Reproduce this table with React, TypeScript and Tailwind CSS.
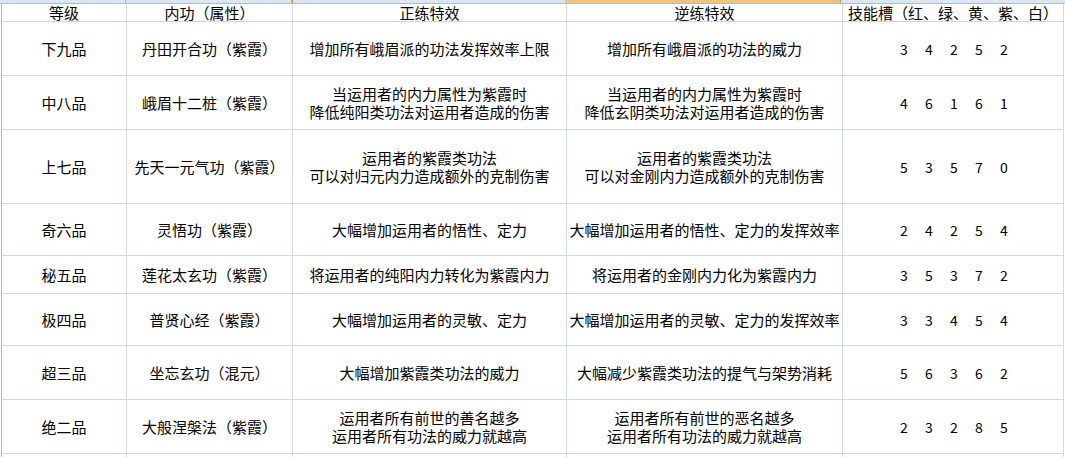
const FONT = "font-['Noto_Sans_CJK_SC','Noto_Sans',sans-serif]";

type Row = {
  grade: string;
  skill: string;
  forward: string[];
  reverse: string[];
  slots: number[];
};

const ROWS: Row[] = [
  {
    grade: "下九品",
    skill: "丹田开合功（紫霞）",
    forward: ["增加所有峨眉派的功法发挥效率上限"],
    reverse: ["增加所有峨眉派的功法的威力"],
    slots: [3, 4, 2, 5, 2],
  },
  {
    grade: "中八品",
    skill: "峨眉十二桩（紫霞）",
    forward: ["当运用者的内力属性为紫霞时", "降低纯阳类功法对运用者造成的伤害"],
    reverse: ["当运用者的内力属性为紫霞时", "降低玄阴类功法对运用者造成的伤害"],
    slots: [4, 6, 1, 6, 1],
  },
  {
    grade: "上七品",
    skill: "先天一元气功（紫霞）",
    forward: ["运用者的紫霞类功法", "可以对归元内力造成额外的克制伤害"],
    reverse: ["运用者的紫霞类功法", "可以对金刚内力造成额外的克制伤害"],
    slots: [5, 3, 5, 7, 0],
  },
  {
    grade: "奇六品",
    skill: "灵悟功（紫霞）",
    forward: ["大幅增加运用者的悟性、定力"],
    reverse: ["大幅增加运用者的悟性、定力的发挥效率"],
    slots: [2, 4, 2, 5, 4],
  },
  {
    grade: "秘五品",
    skill: "莲花太玄功（紫霞）",
    forward: ["将运用者的纯阳内力转化为紫霞内力"],
    reverse: ["将运用者的金刚内力化为紫霞内力"],
    slots: [3, 5, 3, 7, 2],
  },
  {
    grade: "极四品",
    skill: "普贤心经（紫霞）",
    forward: ["大幅增加运用者的灵敏、定力"],
    reverse: ["大幅增加运用者的灵敏、定力的发挥效率"],
    slots: [3, 3, 4, 5, 4],
  },
  {
    grade: "超三品",
    skill: "坐忘玄功（混元）",
    forward: ["大幅增加紫霞类功法的威力"],
    reverse: ["大幅减少紫霞类功法的提气与架势消耗"],
    slots: [5, 6, 3, 6, 2],
  },
  {
    grade: "绝二品",
    skill: "大般涅槃法（紫霞）",
    forward: ["运用者所有前世的善名越多", "运用者所有功法的威力就越高"],
    reverse: ["运用者所有前世的恶名越多", "运用者所有功法的威力就越高"],
    slots: [2, 3, 2, 8, 5],
  },
];

const HEADERS = ["等级", "内功（属性）", "正练特效", "逆练特效", "技能槽（红、绿、黄、紫、白）"];

function Cell({ children }: { children: React.ReactNode }) {
  return (
    <div className="bg-white flex flex-col items-center justify-center text-center whitespace-pre leading-[18px] text-[15px] text-black">
      {children}
    </div>
  );
}

export default function App() {
  return (
    <div className={`w-[1065px] h-[457px] overflow-hidden bg-white ${FONT}`}>
      {/* column header strip, cut off at the top */}
      <div className="flex h-[4px] border-b border-[#a9bdd3]">
        <div className="w-[2px] bg-[#dce6f1]" />
        <div className="w-[124px] bg-[#dce6f1] border-r border-[#9eb6ce]" />
        <div className="w-[166px] bg-[#dce6f1] border-r border-[#9eb6ce]" />
        <div className="w-[273px] bg-[#dce6f1] border-l border-[#f29436]" />
        <div className="w-[276px] bg-[#f7c36e] border-r border-[#f29436]" />
        <div className="flex-1 bg-[#dce6f1]" />
      </div>

      <div className="flex">
        <div className="w-[1px] bg-white" />
        <div className="w-[1px] bg-[#a9bdd3]" />
        <div className="grid grid-cols-[124px_165px_273px_275px_220px] grid-rows-[17px_53px_53px_73px_51px_37px_51px_53px_53px_3px] gap-px bg-[#d0d7e5] border-r border-[#d0d7e5]">
          {HEADERS.map((h) => (
            <div
              key={h}
              className="bg-white flex items-center justify-center whitespace-nowrap leading-[17px] text-[15px] text-black"
            >
              {h}
            </div>
          ))}
          {ROWS.map((r) => (
            <>
              <Cell key={r.grade + "g"}>{r.grade}</Cell>
              <Cell key={r.grade + "s"}>{r.skill}</Cell>
              <Cell key={r.grade + "f"}>{r.forward.join("\n")}</Cell>
              <Cell key={r.grade + "r"}>{r.reverse.join("\n")}</Cell>
              <Cell key={r.grade + "n"}>
                <div className="flex pl-[2px]">
                  {r.slots.map((n, i) => (
                    <span key={i} className="w-[25px] text-center text-[14px]">
                      {n}
                    </span>
                  ))}
                </div>
              </Cell>
            </>
          ))}
          {[0, 1, 2, 3, 4].map((i) => (
            <div key={"e" + i} className="bg-white" />
          ))}
        </div>
      </div>
    </div>
  );
}
